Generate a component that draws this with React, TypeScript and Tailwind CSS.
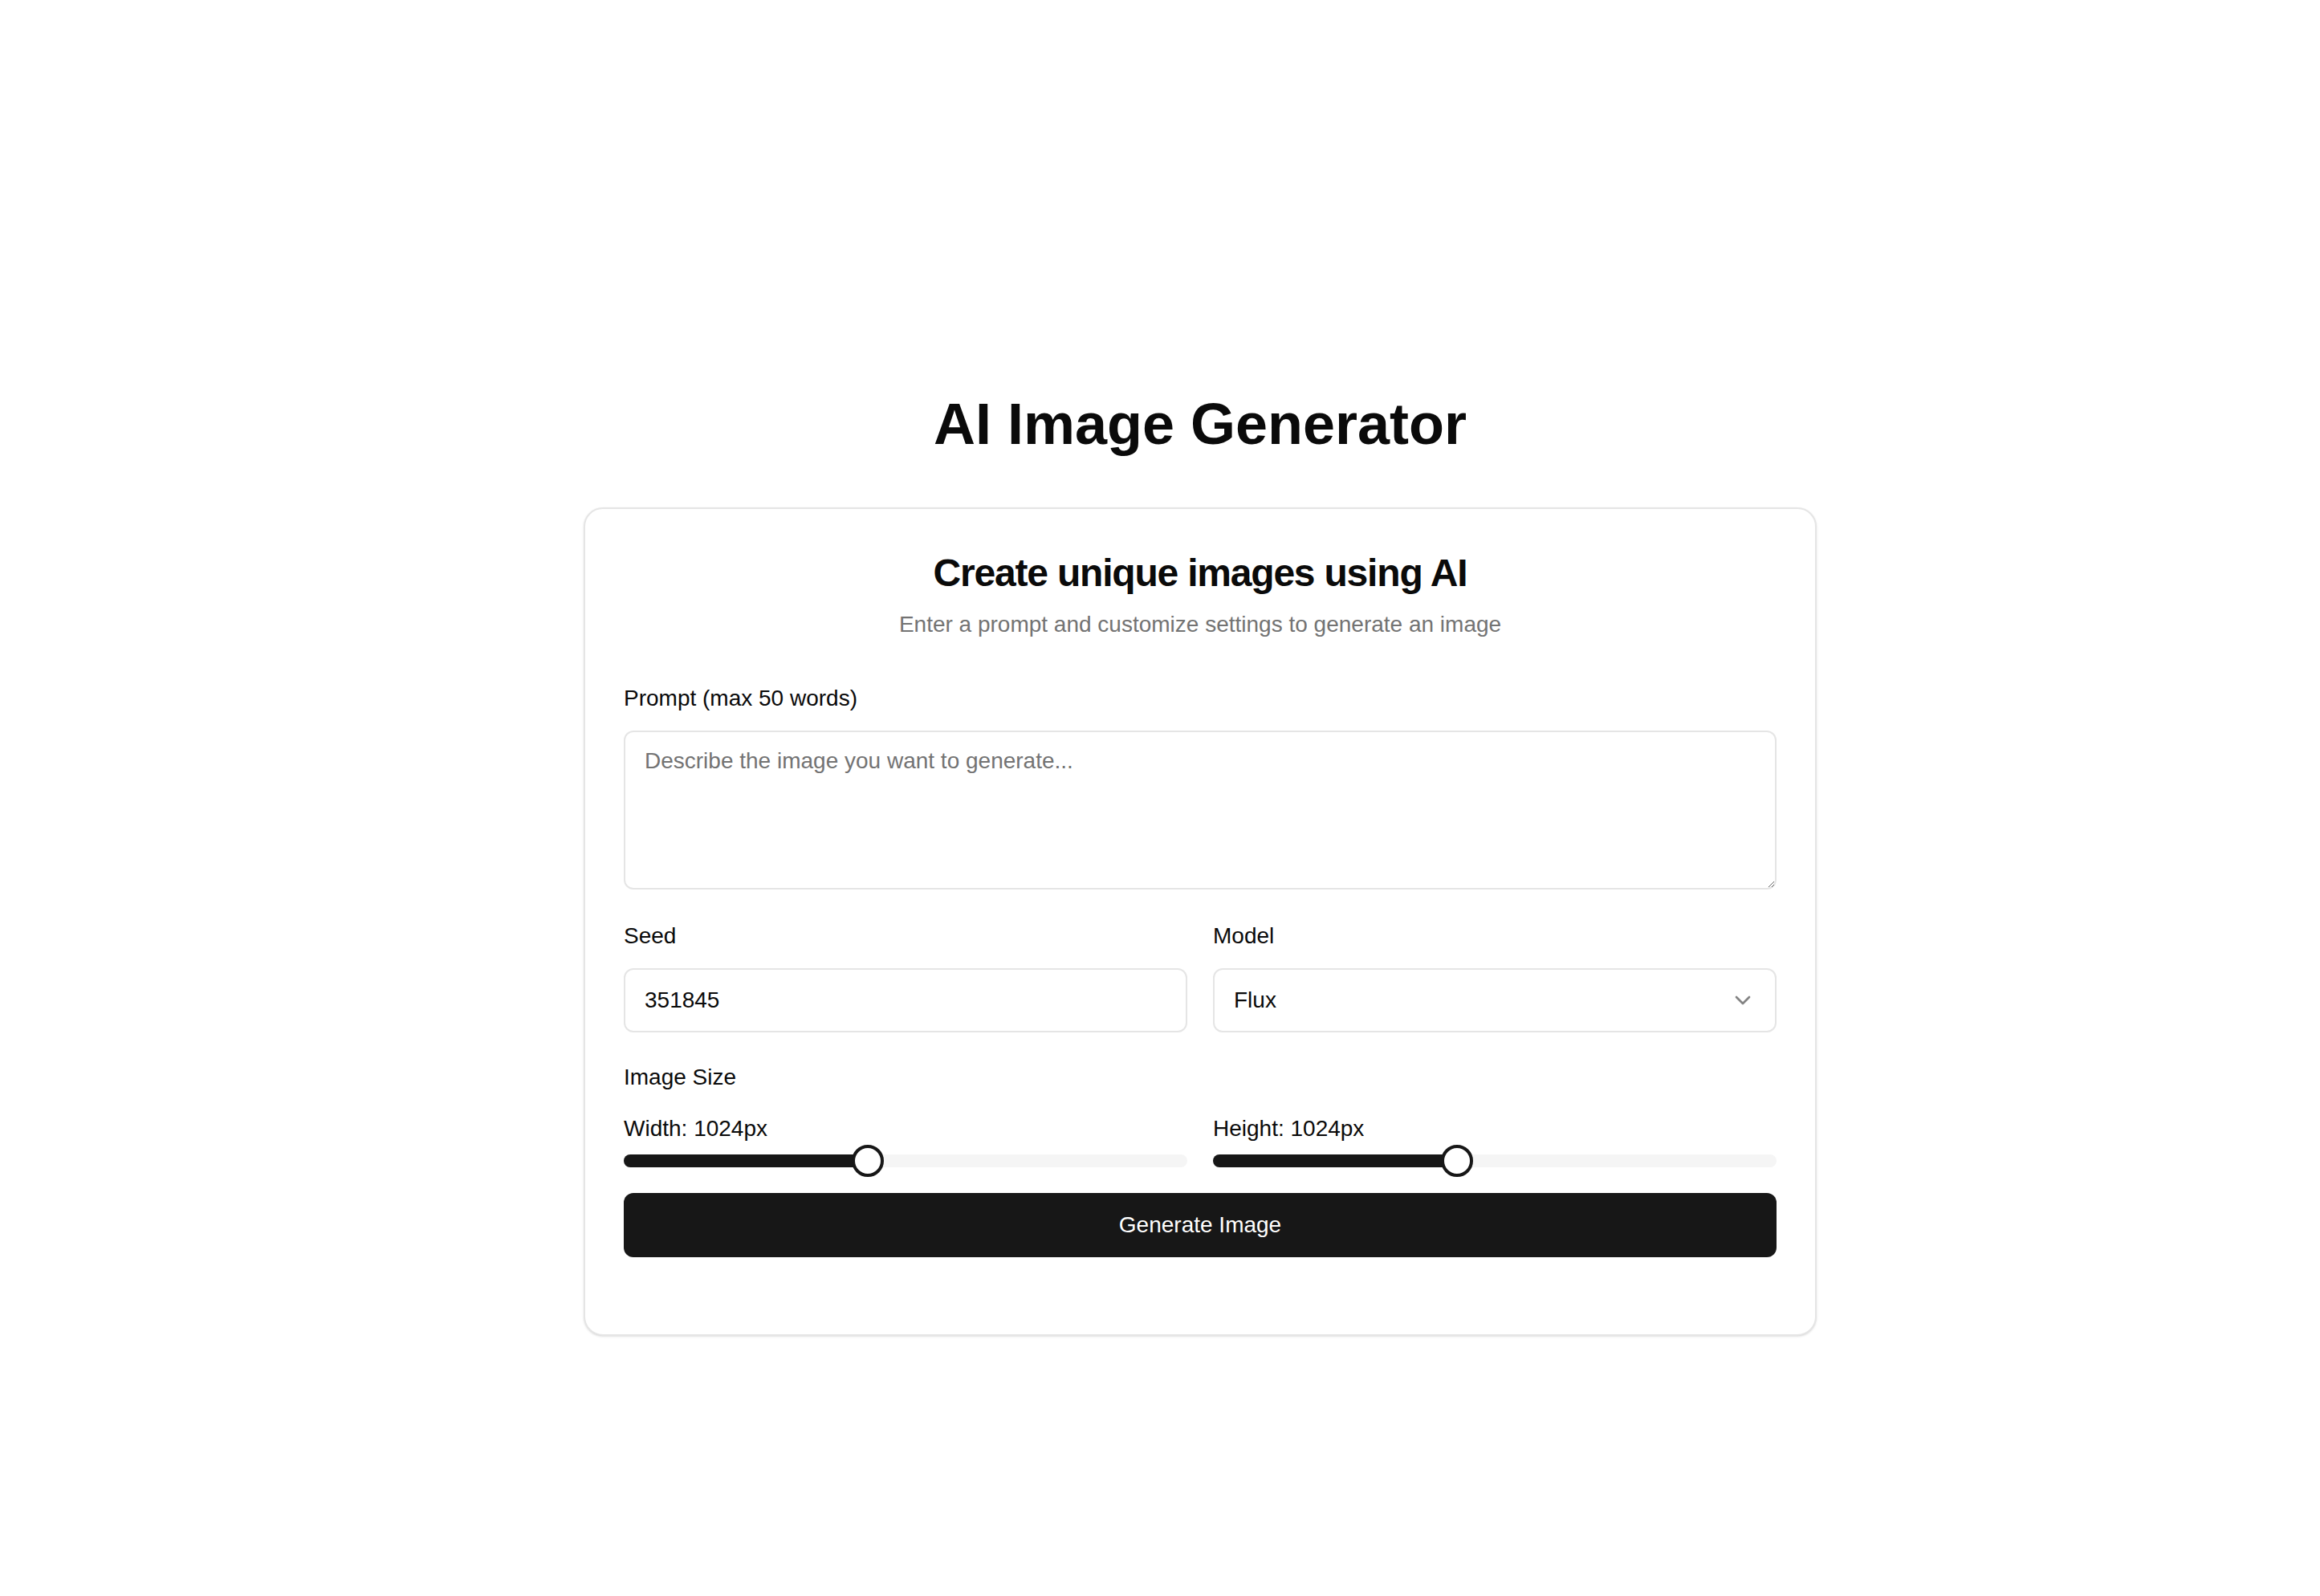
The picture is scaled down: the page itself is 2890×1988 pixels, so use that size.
import { ChevronDown } from 'lucide-react';

const MIN_SIZE = 256;
const MAX_SIZE = 2048;

function SizeSlider({ label, value }: { label: string; value: number }) {
  const pct = (value - MIN_SIZE) / (MAX_SIZE - MIN_SIZE);
  // keep the thumb inside the track, as radix does
  const offset = 20 * (1 - 2 * pct);
  return (
    <div>
      <div className="text-[28px] leading-[40px]">
        {label}: {value}px
      </div>
      <div className="relative flex h-10 items-center">
        <div className="relative h-4 w-full overflow-hidden rounded-full bg-[#f5f5f5]">
          <div className="absolute inset-y-0 left-0 bg-[#171717]" style={{ width: `${pct * 100}%` }} />
        </div>
        <div
          className="absolute top-0 h-10 w-10 rounded-full border-4 border-[#171717] bg-white"
          style={{ left: `calc(${pct * 100}% - 20px + ${offset}px)` }}
        />
      </div>
    </div>
  );
}

export default function App() {
  return (
    <div className="min-h-screen bg-white pl-[100px] pt-[488px] font-['Liberation_Sans',Arial,sans-serif] text-[#0a0a0a]">
      <div className="mx-auto w-full max-w-[1536px]">
        <h1 className="text-center text-[72px] font-bold leading-[80px]">AI Image Generator</h1>

        <div className="mt-16 rounded-3xl border-2 border-[#e5e5e5] bg-white shadow-sm">
          {/* Header */}
          <div className="flex flex-col gap-3 px-12 pt-12 pb-[52px] text-center">
            <h2 className="text-[48px] font-bold leading-[64px] tracking-tight">Create unique images using AI</h2>
            <p className="text-[28px] leading-[40px] text-[#737373]">
              Enter a prompt and customize settings to generate an image
            </p>
          </div>

          {/* Content */}
          <div className="px-12 pb-24">
            <label className="block text-[28px] leading-[40px]">Prompt (max 50 words)</label>
            <textarea
              placeholder="Describe the image you want to generate..."
              className="mt-5 block h-[198px] w-full rounded-xl border-2 border-[#e5e5e5] bg-white px-6 py-4 text-[28px] leading-[40px] outline-none placeholder:text-[#737373]"
            />

            <div className="mt-[38px] grid grid-cols-2 gap-8">
              <div>
                <label className="block text-[28px] leading-[40px]">Seed</label>
                <input
                  type="text"
                  defaultValue="351845"
                  className="mt-5 block h-20 w-full rounded-xl border-2 border-[#e5e5e5] bg-white px-6 text-[28px] outline-none"
                />
              </div>
              <div>
                <label className="block text-[28px] leading-[40px]">Model</label>
                <div className="mt-5 flex h-20 w-full items-center justify-between rounded-xl border-2 border-[#e5e5e5] bg-white px-6 text-[28px]">
                  <span>Flux</span>
                  <ChevronDown className="h-8 w-8 opacity-50" />
                </div>
              </div>
            </div>

            <div className="mt-9 text-[28px] leading-[40px]">Image Size</div>
            <div className="mt-6 grid grid-cols-2 gap-8">
              <SizeSlider label="Width" value={1024} />
              <SizeSlider label="Height" value={1024} />
            </div>

            <button className="mt-5 flex h-20 w-full items-center justify-center rounded-xl bg-[#171717] text-[28px] text-white">
              Generate Image
            </button>
          </div>
        </div>
      </div>
    </div>
  );
}
